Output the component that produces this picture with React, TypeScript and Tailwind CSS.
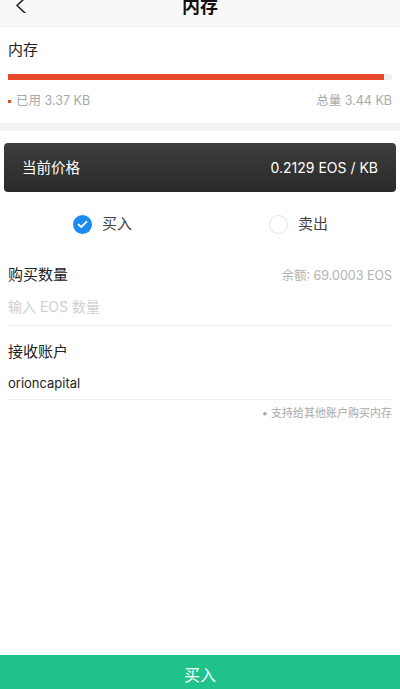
import React, { useState } from 'react';

const font = { fontFamily: 'Inter, "Noto Sans CJK SC", sans-serif' };

const Radio = ({ checked, label, onClick }: { checked: boolean; label: string; onClick: () => void }) => (
  <button onClick={onClick} className="flex items-center gap-[10px]">
    {checked ? (
      <span className="flex h-[19px] w-[19px] items-center justify-center rounded-full bg-[#1a8cf0]">
        <svg width="11" height="9" viewBox="0 0 11 9" fill="none">
          <path d="M1.5 4.5L4.2 7L9.5 1.8" stroke="white" strokeWidth="1.8" strokeLinecap="round" strokeLinejoin="round" />
        </svg>
      </span>
    ) : (
      <span className="h-[19px] w-[19px] rounded-full border border-[#e3e3e3] bg-white" />
    )}
    <span className="text-[15px] text-[#444]">{label}</span>
  </button>
);

export default function App() {
  const [mode, setMode] = useState<'buy' | 'sell'>('buy');

  return (
    <div className="flex h-[689px] w-[400px] flex-col overflow-hidden bg-white" style={font}>
      {/* Header */}
      <div className="relative flex h-[27px] shrink-0 justify-center border-b border-[#ebebeb] bg-[#f8f8f8]">
        <svg className="absolute left-[14px] top-[-3px]" width="14" height="16" viewBox="0 0 14 16" fill="none">
          <path d="M11 1L3 8.5L11 16" stroke="#222" strokeWidth="1.6" strokeLinecap="round" strokeLinejoin="round" />
        </svg>
        <h1 className="-mt-[4px] text-[18px] font-bold leading-[22px] text-[#111]">内存</h1>
      </div>

      {/* Memory usage */}
      <div className="shrink-0 px-[8px] pb-[13px] pt-[12px]">
        <div className="text-[15px] leading-[22px] text-[#222]">内存</div>
        <div className="mt-[13px] h-[6px] w-full rounded-full bg-[#eeeeee]">
          <div className="h-full w-[98%] bg-[#e8492d]" />
        </div>
        <div className="mt-[12px] flex items-center justify-between text-[12.5px] leading-[18px] text-[#a8a8a8]">
          <div className="flex items-center gap-[5px]">
            <span className="h-[3px] w-[3px] bg-[#e8492d]" />
            <span>已用 3.37 KB</span>
          </div>
          <span>总量 3.44 KB</span>
        </div>
      </div>

      <div className="h-[8px] shrink-0 bg-[#f3f3f3]" />

      {/* Price card */}
      <div className="px-[4px] pt-[12px]">
        <div className="flex h-[49px] items-center justify-between rounded-[4px] bg-gradient-to-b from-[#3d3d3d] to-[#2a2a2a] px-[18px] text-white">
          <span className="text-[14.5px]">当前价格</span>
          <span className="text-[14px]">0.2129 EOS / KB</span>
        </div>
      </div>

      {/* Buy / sell */}
      <div className="grid grid-cols-2 pt-[21px]">
        <div className="pl-[73px]">
          <Radio checked={mode === 'buy'} label="买入" onClick={() => setMode('buy')} />
        </div>
        <div className="pl-[69px]">
          <Radio checked={mode === 'sell'} label="卖出" onClick={() => setMode('sell')} />
        </div>
      </div>

      {/* Amount */}
      <div className="px-[8px] pt-[28px]">
        <div className="flex items-baseline justify-between">
          <span className="text-[15px] text-[#222]">购买数量</span>
          <span className="text-[12.5px] text-[#b3b3b3]">余额: 69.0003 EOS</span>
        </div>
        <input
          className="mt-[10px] w-full pb-[7px] text-[14px] leading-[22px] text-[#222] outline-none placeholder:text-[#d0d0d0]"
          placeholder="输入 EOS 数量"
        />
        <div className="h-px bg-[#eeeeee]" />
      </div>

      {/* Receiver */}
      <div className="px-[8px] pt-[15px]">
        <div className="text-[15px] leading-[22px] text-[#222]">接收账户</div>
        <div className="mt-[9px] pb-[5px] text-[13px] leading-[22px] text-[#222]">orioncapital</div>
        <div className="h-px bg-[#eeeeee]" />
        <div className="mt-[5px] text-right text-[11px] leading-[16px] text-[#a8a8a8]">• 支持给其他账户购买内存</div>
      </div>

      <div className="flex-1" />

      <button className="flex h-[34px] shrink-0 items-start justify-center bg-[#1fc28a] pt-[9px] text-[16px] leading-[22px] text-white">
        买入
      </button>
    </div>
  );
}
